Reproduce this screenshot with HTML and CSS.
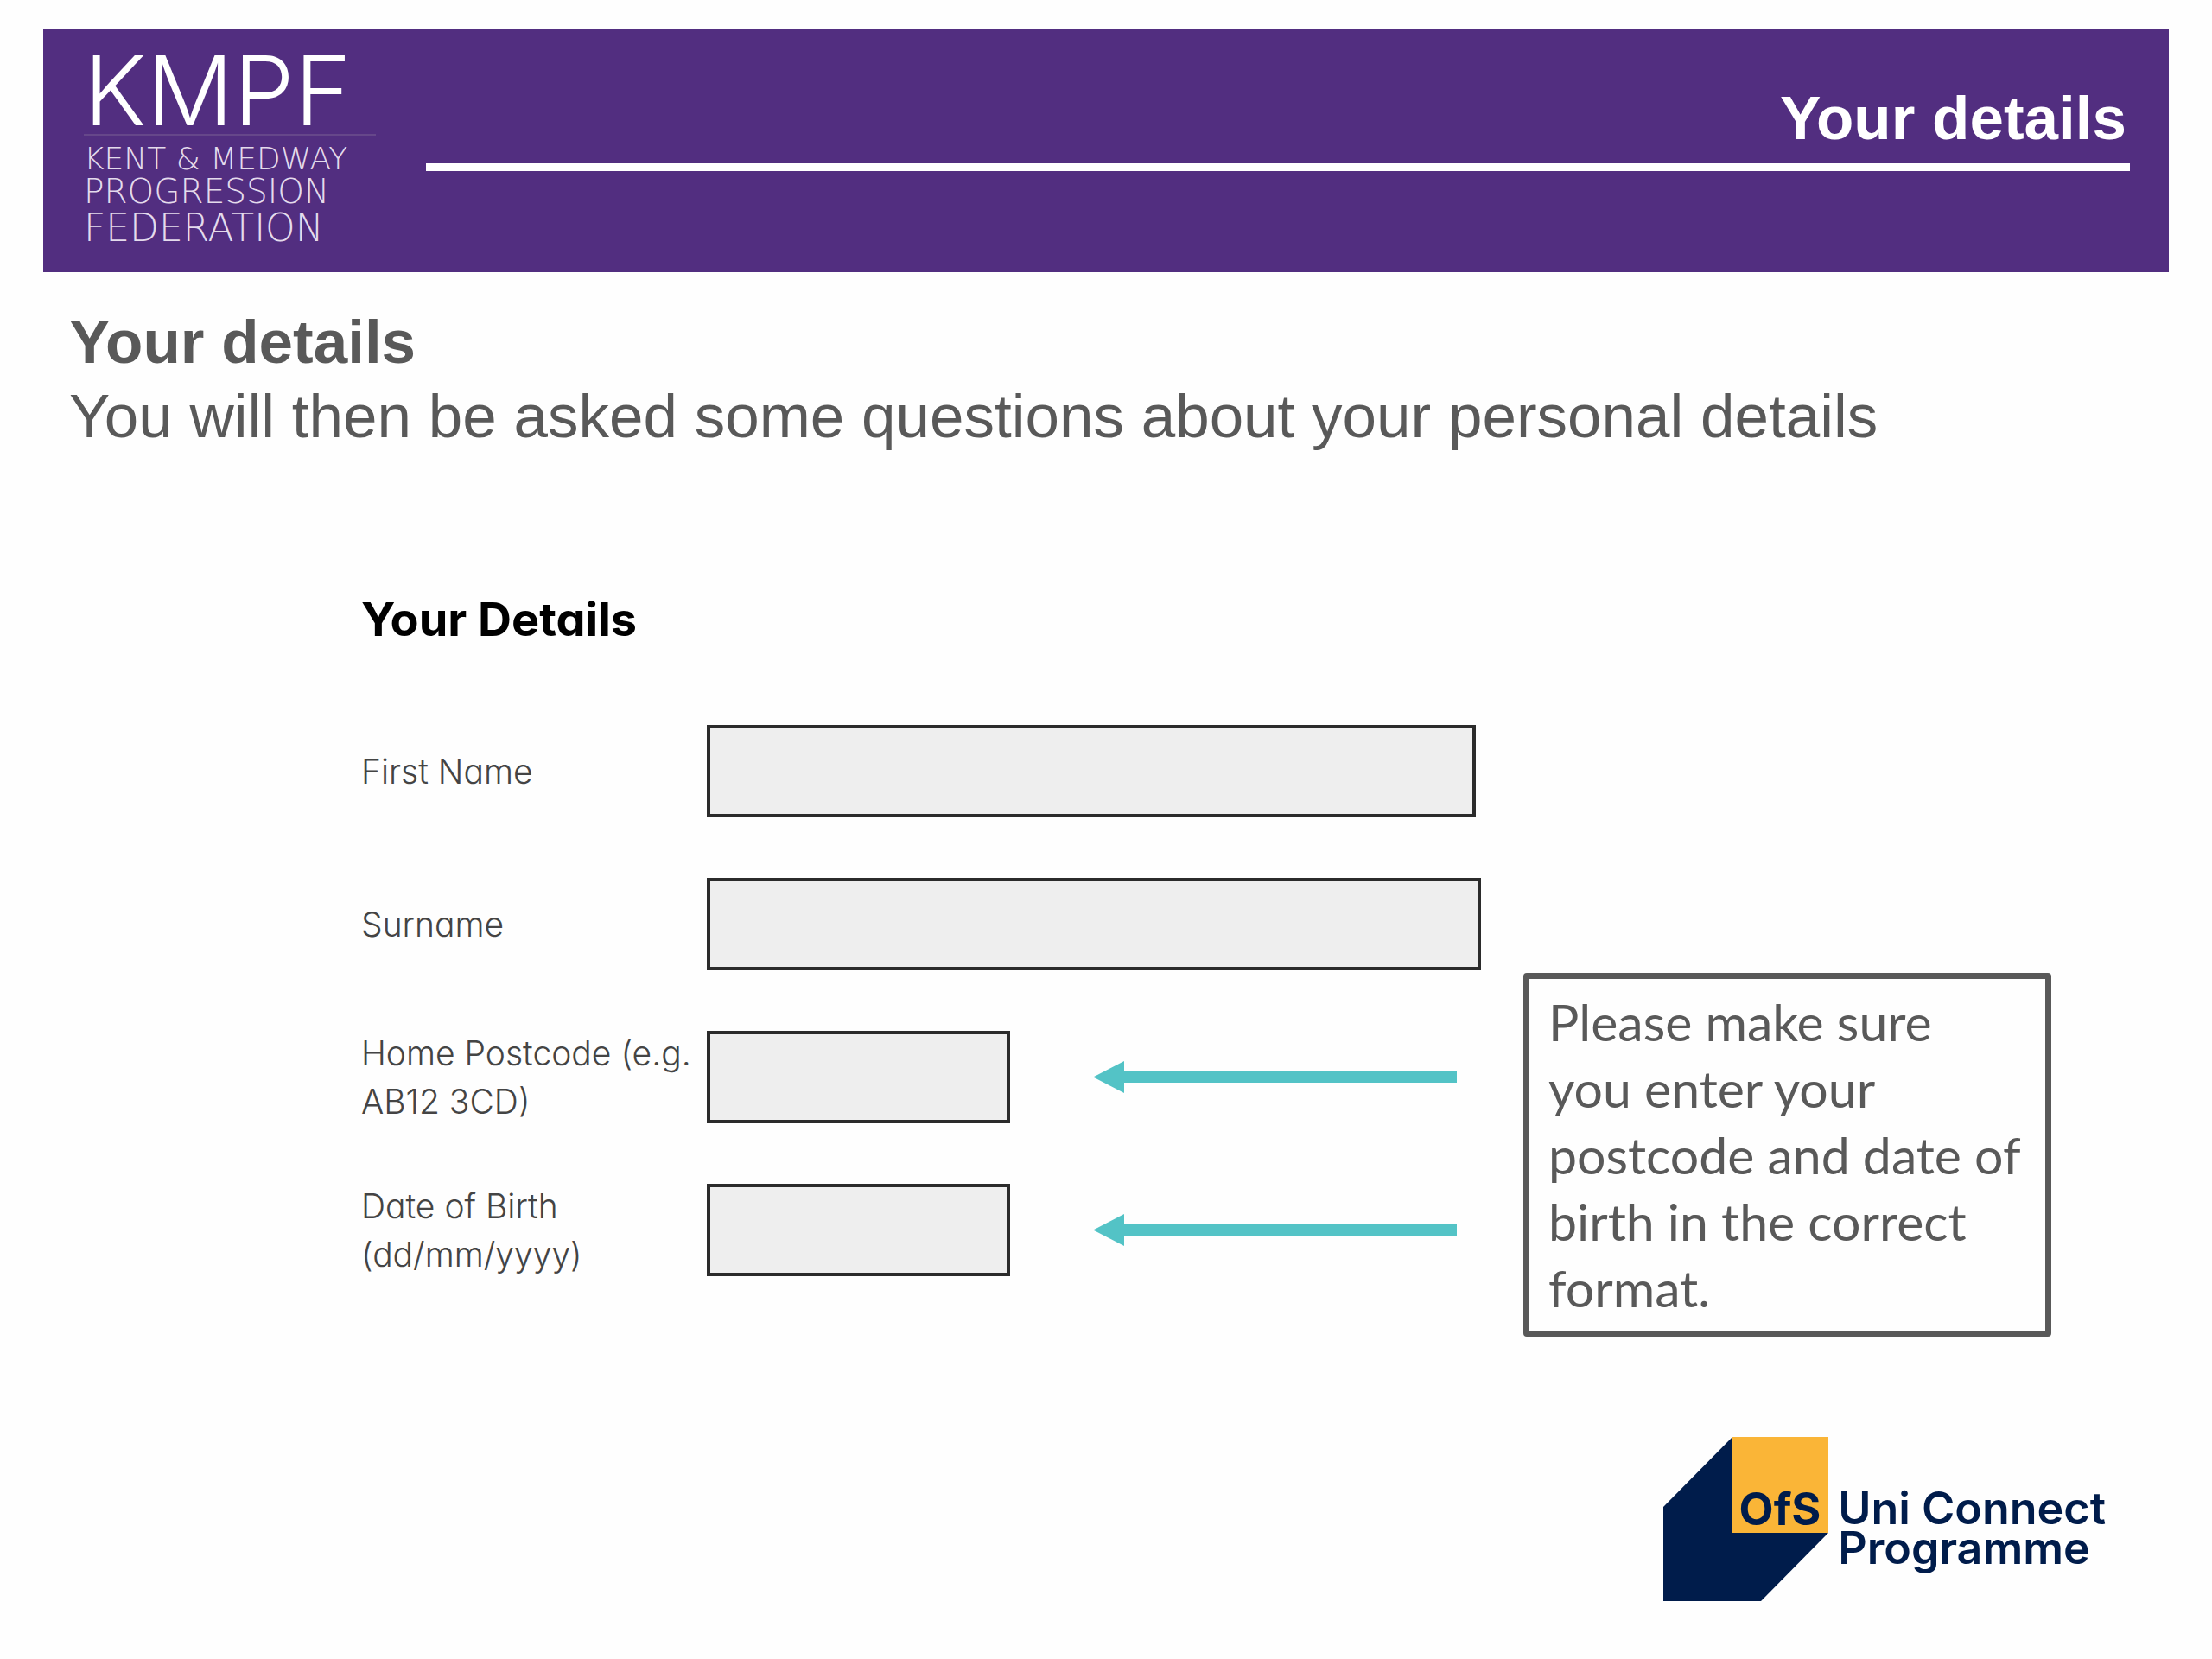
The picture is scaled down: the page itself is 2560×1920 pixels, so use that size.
FILE: index.html
```html
<!DOCTYPE html>
<html lang="en">
<head>
<meta charset="utf-8">
<meta name="viewport" content="width=device-width, initial-scale=1">
<title>Your details</title>
<link rel="stylesheet" href="styles.css">
</head>
<body>
<header class="banner">
  <div class="brand">
    <span class="brand-name">KMPF</span>
    <span class="brand-line brand-kent">KENT &amp; MEDWAY</span>
    <span class="brand-line brand-progression">PROGRESSION</span>
    <span class="brand-line brand-federation">FEDERATION</span>
  </div>
  <h1 class="banner-title">Your details</h1>
</header>
<main>
  <section class="intro">
    <h2 class="intro-title">Your details</h2>
    <p class="intro-text">You will then be asked some questions about your personal details</p>
  </section>
  <section class="details">
    <form class="form">
      <h3 class="form-title">Your Details</h3>
      <div class="row">
        <label class="label" for="first-name">First Name</label>
        <input class="field first-name" id="first-name" type="text">
      </div>
      <div class="row">
        <label class="label" for="surname">Surname</label>
        <input class="field surname" id="surname" type="text">
      </div>
      <div class="row">
        <label class="label" for="postcode">Home Postcode (e.g.<br>AB12 3CD)</label>
        <input class="field short" id="postcode" type="text">
        <svg class="arrow" viewBox="0 0 421 37" aria-hidden="true"><path d="M0 18.500 36 0V12H421V25H36V37Z"/></svg>
      </div>
      <div class="row">
        <label class="label" for="birth">Date of Birth<br>(dd/mm/yyyy)</label>
        <input class="field short" id="birth" type="text">
        <svg class="arrow" viewBox="0 0 421 37" aria-hidden="true"><path d="M0 18.500 36 0V12H421V25H36V37Z"/></svg>
      </div>
    </form>
    <aside class="note">Please make sure<br>you enter your<br>postcode and date of<br>birth in the correct<br>format.</aside>
  </section>
</main>
<footer class="footer">
  <svg class="ofs" viewBox="0 0 192 190" role="img" aria-label="OfS">
    <path fill="#001c4b" d="M80 0 0 81V190H113L191 111Z"/>
    <path fill="#fab537" d="M80 0H191V111H80Z"/>
    <text class="ofs-text" x="135" y="102" text-anchor="middle">OfS</text>
  </svg>
  <p class="programme">Uni Connect<br>Programme</p>
</footer>
</body>
</html>
```
FILE: styles.css
```css
* {
  box-sizing: border-box;
}

body {
  margin: 0;
  background: #fefefe;
  color: #595959;
  font-family: "Liberation Sans", Arial, sans-serif;
}

h1, h2, h3, p {
  margin: 0;
}

.banner {
  display: flex;
  align-items: flex-start;
  gap: 58px;
  margin: 33px 50px 0;
  padding: 28px 45px 28px 47px;
  min-height: 282px;
  background: #522e80;
  color: #fff;
}

.brand {
  display: flex;
  flex-direction: column;
  width: 338px;
  font-family: "DejaVu Sans", sans-serif;
  font-weight: 200;
  white-space: nowrap;
}

.brand-name {
  height: 96px;
  border-bottom: 2px solid #66478a;
  font-family: Inter, sans-serif;
  font-size: 112px;
  font-weight: 300;
  line-height: 86px;
}

.brand-line {
  color: #e4dbec;
}

.brand-kent {
  margin-top: 8px;
  font-size: 36px;
  line-height: 38px;
}

.brand-progression {
  font-size: 39px;
  line-height: 38px;
}

.brand-federation {
  font-size: 44px;
  line-height: 46px;
}

.banner-title {
  flex: 1;
  margin-top: 36px;
  padding: 0 4px 12px 0;
  border-bottom: 9px solid #fff;
  font-size: 71px;
  line-height: 80px;
  text-align: right;
}

.intro {
  padding: 38px 80px 0;
  font-size: 71px;
  line-height: 86px;
}

.intro-title {
  font-size: 71px;
}

.details {
  display: grid;
  grid-template-columns: 1345fr 611fr;
  align-items: end;
  padding: 160px 186px 0 418px;
}

.form {
  display: flex;
  flex-direction: column;
  gap: 70px;
  padding-bottom: 70px;
  font-family: Inter, "Open Sans", sans-serif;
  font-feature-settings: "cv11";
}

.form-title {
  margin-bottom: 20px;
  color: #000;
  font-size: 54px;
  font-weight: 700;
  line-height: 64px;
}

.row {
  display: flex;
  align-items: center;
  height: 107px;
}

.label {
  flex: none;
  width: 400px;
  color: #444;
  font-size: 39px;
  font-weight: 300;
  line-height: 56px;
  white-space: nowrap;
}

.field {
  height: 107px;
  padding: 0 24px;
  border: 4px solid #2b2b2b;
  border-radius: 0;
  background: #eee;
  font: inherit;
  font-size: 39px;
}

.first-name {
  width: 890px;
}

.surname {
  width: 896px;
}

.short {
  width: 351px;
}

.arrow {
  width: 421px;
  margin-left: 96px;
  fill: #53c3c6;
}

.note {
  padding: 11px 20px 11px 22px;
  border: 7px solid #595959;
  border-radius: 4px;
  font-family: Lato, sans-serif;
  font-size: 59px;
  line-height: 77px;
  white-space: nowrap;
}

.footer {
  display: flex;
  justify-content: flex-end;
  gap: 10px;
  padding: 116px 123px 68px 0;
  color: #001c4b;
  font-family: Inter, sans-serif;
}

.ofs {
  width: 192px;
  height: 190px;
}

.ofs-text {
  fill: #001c4b;
  font-size: 52px;
  font-weight: 700;
}

.programme {
  padding-top: 60px;
  font-size: 52px;
  font-weight: 600;
  line-height: 46px;
}
```
